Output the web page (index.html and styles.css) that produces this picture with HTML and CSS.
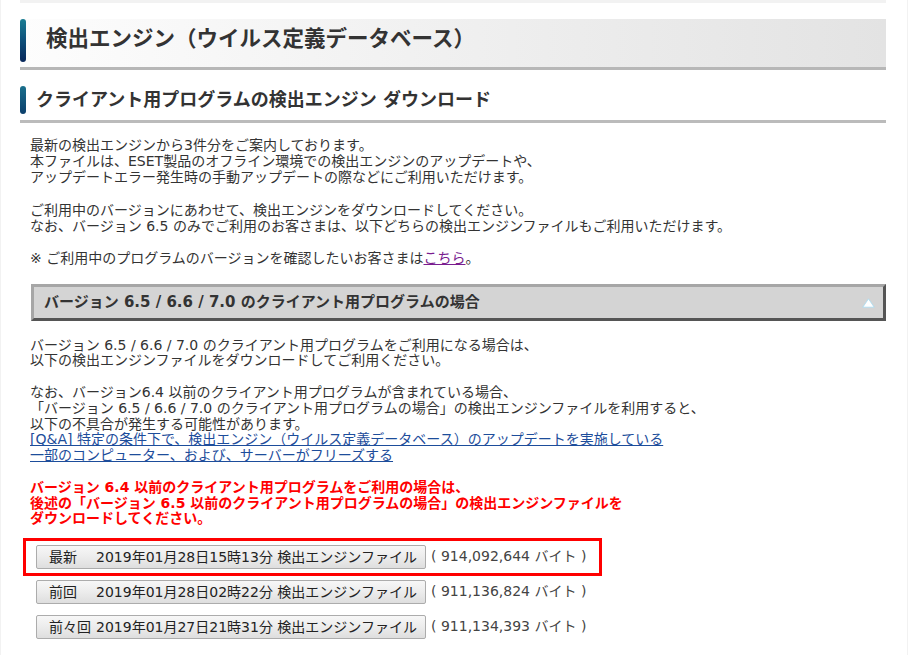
FILE: index.html
```html
<!DOCTYPE html>
<html lang="ja">
<head>
<meta charset="utf-8">
<title>検出エンジン（ウイルス定義データベース）</title>
<link rel="stylesheet" href="styles.css">
</head>
<body>
<div class="page">
  <div class="topbar"></div>
  <h1 class="title"><span class="accent accent-lg"></span><span class="title-text">検出エンジン（ウイルス定義データベース）</span></h1>
  <h2 class="subtitle"><span class="accent accent-sm"></span><span class="subtitle-text">クライアント用プログラムの検出エンジン ダウンロード</span></h2>

  <div class="intro">
    <p>最新の検出エンジンから3件分をご案内しております。<br>本ファイルは、ESET製品のオフライン環境での検出エンジンのアップデートや、<br>アップデートエラー発生時の手動アップデートの際などにご利用いただけます。</p>
    <p>ご利用中のバージョンにあわせて、検出エンジンをダウンロードしてください。<br>なお、バージョン 6.5 のみでご利用のお客さまは、以下どちらの検出エンジンファイルもご利用いただけます。</p>
    <p>※ ご利用中のプログラムのバージョンを確認したいお客さまは<a class="visited" href="#">こちら</a>。</p>
  </div>

  <div class="acc-head">
    <span class="acc-title">バージョン 6.5 / 6.6 / 7.0 のクライアント用プログラムの場合</span>
    <svg class="acc-icon" width="13" height="10" viewBox="0 0 13 10"><polygon points="6.5,0.8 12.2,9.2 0.8,9.2" fill="#ffffff" stroke="#a6dcf2" stroke-width="0.8"/></svg>
  </div>

  <div class="section">
    <p>バージョン 6.5 / 6.6 / 7.0 のクライアント用プログラムをご利用になる場合は、<br>以下の検出エンジンファイルをダウンロードしてご利用ください。</p>
    <p>なお、バージョン6.4 以前のクライアント用プログラムが含まれている場合、<br>「バージョン 6.5 / 6.6 / 7.0 のクライアント用プログラムの場合」の検出エンジンファイルを利用すると、<br>以下の不具合が発生する可能性があります。<br><a class="link" href="#">[Q&amp;A] 特定の条件下で、検出エンジン（ウイルス定義データベース）のアップデートを実施している<br>一部のコンピューター、および、サーバーがフリーズする</a></p>
    <p class="warn">バージョン 6.4 以前のクライアント用プログラムをご利用の場合は、<br>後述の「バージョン 6.5 以前のクライアント用プログラムの場合」の検出エンジンファイルを<br>ダウンロードしてください。</p>

    <div class="downloads">
      <div class="row latest">
        <button class="dl-btn"><span class="prefix">最新</span>2019年01月28日15時13分 検出エンジンファイル</button>
        <span class="size">( 914,092,644 バイト )</span>
      </div>
      <div class="row">
        <button class="dl-btn"><span class="prefix">前回</span>2019年01月28日02時22分 検出エンジンファイル</button>
        <span class="size">( 911,136,824 バイト )</span>
      </div>
      <div class="row">
        <button class="dl-btn"><span class="prefix">前々回</span>2019年01月27日21時31分 検出エンジンファイル</button>
        <span class="size">( 911,134,393 バイト )</span>
      </div>
    </div>
  </div>
</div>
</body>
</html>
```
FILE: styles.css
```css
html, body {
  margin: 0;
  padding: 0;
  background: #ffffff;
}

body {
  font-family: "DejaVu Sans", "Noto Sans CJK JP", sans-serif;
  color: #333333;
  font-size: 14px;
}

.page {
  width: 908px;
  height: 655px;
  box-sizing: border-box;
  border-left: 1px solid #f2f2f2;
  border-right: 1px solid #f2f2f2;
  padding: 0 21px 0 19px;
  overflow: hidden;
}

.topbar {
  height: 3px;
  background: #f2f2f2;
}

.title {
  margin: 16px 0 0 0;
  height: 48px;
  display: flex;
  align-items: flex-start;
  background: linear-gradient(to right, #fdfdfd 0%, #f1f1f1 45%, #e3e3e3 100%);
  border-bottom: 3px solid #b7b7b7;
}

.accent {
  display: block;
  width: 6px;
  border-radius: 3px;
  flex: none;
}

.accent-lg {
  height: 43px;
  background: linear-gradient(to bottom, #1a7d93 0%, #0d4f7a 50%, #08275a 100%);
}

.accent-sm {
  height: 28px;
  background: linear-gradient(to bottom, #1a6f8c 0%, #0c3f6b 100%);
}

.title-text {
  margin-left: 20px;
  font-size: 21.5px;
  font-weight: bold;
  line-height: 40px;
  color: #333333;
}

.subtitle {
  margin: 16px 0 0 0;
  height: 34px;
  display: flex;
  align-items: flex-start;
  border-bottom: 3px solid #bbbbbb;
}

.subtitle-text {
  margin-left: 10px;
  font-size: 18px;
  font-weight: bold;
  line-height: 28px;
  color: #333333;
}

.intro {
  margin: 14px 0 0 10px;
  line-height: 16.2px;
}

.intro p {
  margin: 0 0 16.2px 0;
}

.intro p:last-child {
  margin-bottom: 0;
}

.visited {
  color: #7a1d8f;
  text-decoration: underline;
}

.acc-head {
  margin: 17px 0 0 11px;
  height: 31px;
  display: flex;
  align-items: center;
  justify-content: space-between;
  background: #d4d4d4;
  border-style: solid;
  border-width: 3px;
  border-color: #a6a6a6 #555555 #555555 #a6a6a6;
  padding: 0 8px 0 10px;
}

.acc-title {
  font-size: 15px;
  font-weight: bold;
  color: #333333;
  line-height: 31px;
}

.acc-icon {
  display: block;
  margin-top: 1px;
}

.section {
  margin: 17px 0 0 10px;
  line-height: 15.8px;
}

.section p {
  margin: 0 0 15.8px 0;
}

.link {
  color: #1d4d9b;
  text-decoration: underline;
}

.warn {
  color: #ff0000;
  font-weight: bold;
}

.section p.warn {
  margin-bottom: 11px;
}

.downloads {
  margin-left: -7px;
}

.row {
  display: flex;
  align-items: center;
  gap: 5px;
  height: 24px;
  margin: 11px 0 0 13px;
}

.row.latest {
  width: fit-content;
  margin: 0;
  border: 3px solid #ff0000;
  padding: 4px 13px 4px 10px;
}

.row.latest + .row {
  margin-top: 4px;
}

.dl-btn {
  width: 390px;
  height: 24px;
  box-sizing: border-box;
  padding: 0 0 0 12px;
  text-align: left;
  font-family: "DejaVu Sans", "Noto Sans CJK JP", sans-serif;
  font-size: 14px;
  line-height: 22px;
  color: #222222;
  background: linear-gradient(to bottom, #f7f7f7 0%, #ececec 50%, #dedede 100%);
  border: 1px solid #acacac;
  border-radius: 2px;
  white-space: nowrap;
}

.prefix {
  display: inline-block;
  width: 47px;
}

.size {
  font-size: 14px;
  color: #444444;
  white-space: nowrap;
}
```
